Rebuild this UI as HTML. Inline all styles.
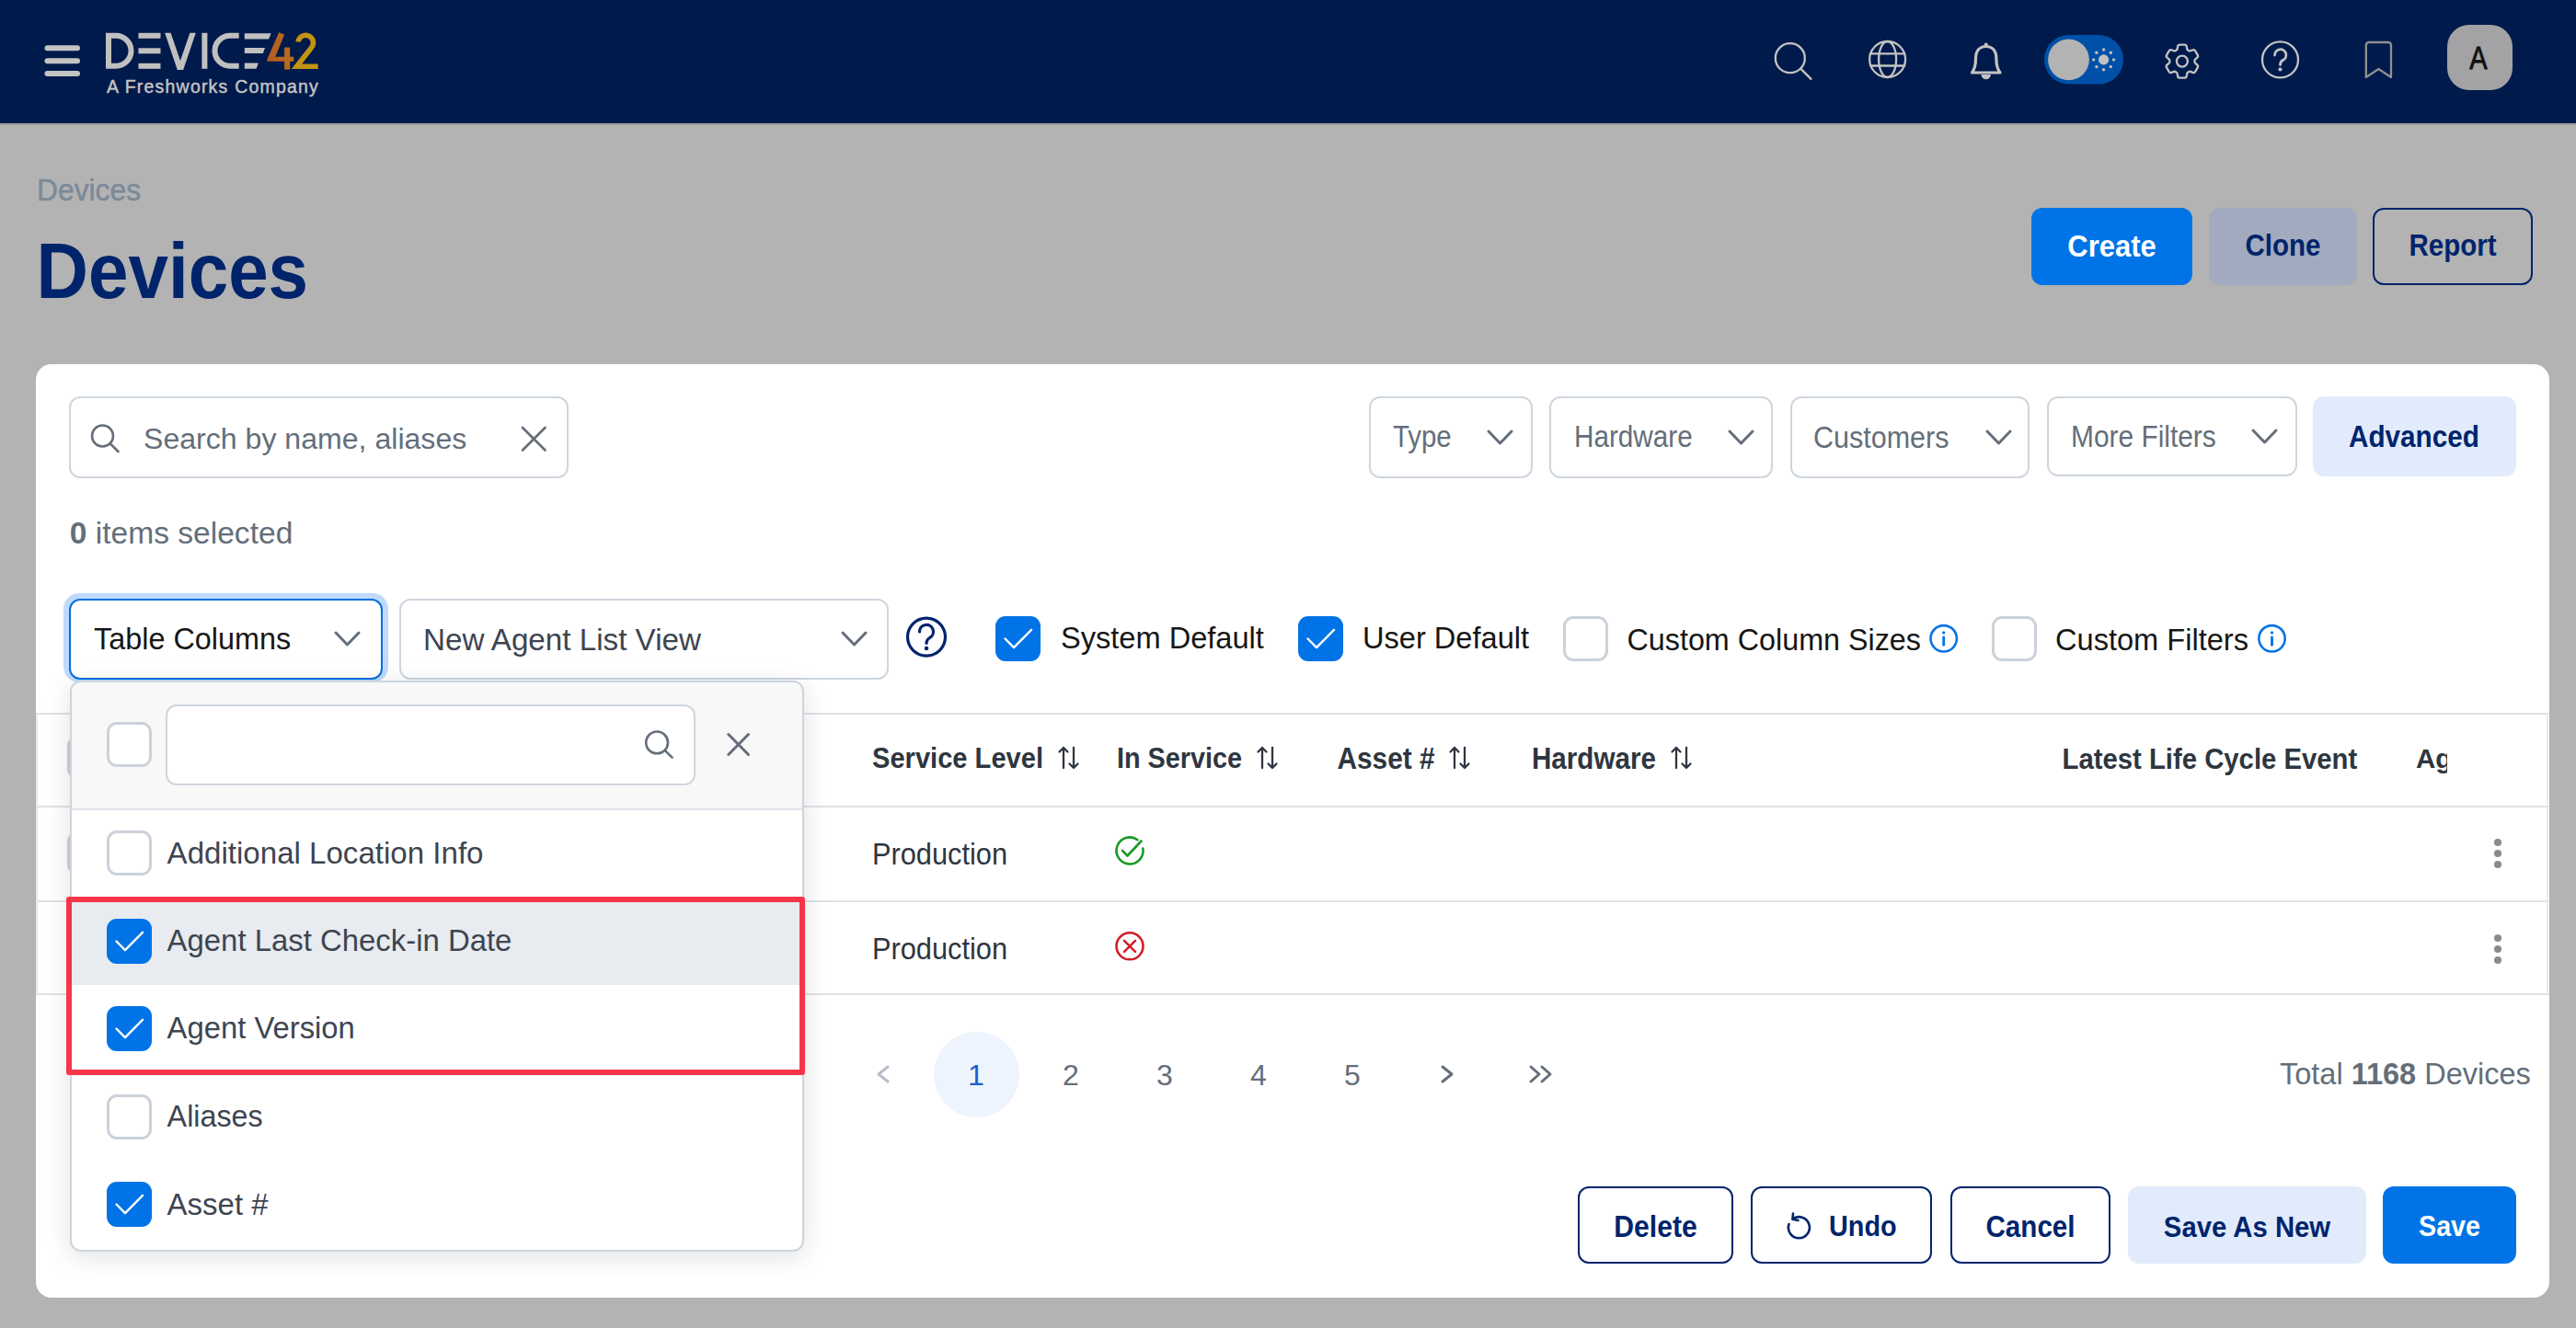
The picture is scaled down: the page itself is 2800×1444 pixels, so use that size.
<!DOCTYPE html>
<html><head><meta charset="utf-8">
<style>
*{box-sizing:border-box;margin:0;padding:0}
html,body{width:2800px;height:1444px;overflow:hidden;background:#b3b3b3;font-family:"Liberation Sans",sans-serif}
.a{position:absolute}
.t{position:absolute;line-height:1;white-space:nowrap}
.b{font-weight:bold}
.g{transform:scaleY(1.1);transform-origin:0 84.65%}
#hdr{position:absolute;left:0;top:0;width:2800px;height:134px;background:#001a4b}
#hdrline{position:absolute;left:0;top:134px;width:2800px;height:2px;background:#9e9e9e}
.btn{position:absolute;border-radius:12px}
.box{position:absolute;border:2px solid #cfd6de;border-radius:12px;background:#fff}
.cbx{position:absolute;width:49px;height:49px;border-radius:11px}
.cbx.on{background:#0073e6}
.cbx.off{border:3px solid #cbd2da;background:#fff}
</style></head><body>
<div id="hdr"></div>
<div id="hdrline"></div>
<!-- header svg -->
<svg class="a" style="left:0;top:0" width="2800" height="134" viewBox="0 0 2800 134">
  <g stroke="#c4c4c4" stroke-width="6" stroke-linecap="round">
    <line x1="51.5" y1="52.3" x2="84" y2="52.3"/>
    <line x1="51.5" y1="66.2" x2="84" y2="66.2"/>
    <line x1="51.5" y1="80" x2="84" y2="80"/>
  </g>
  <defs><linearGradient id="g42" x1="290" y1="0" x2="346" y2="0" gradientUnits="userSpaceOnUse"><stop offset="0" stop-color="#b45a22"/><stop offset="1" stop-color="#c0801a"/></linearGradient></defs>
  <g fill="#c0c0c0">
    <path d="M118,38.8 H126 A16.5,16.5 0 0 1 126,71.8 H118 Z" fill="none" stroke="#c0c0c0" stroke-width="6"/>
    <rect x="150.5" y="35.8" width="24" height="6"/>
    <rect x="150.5" y="52.3" width="24" height="6"/>
    <rect x="150.5" y="68.8" width="24" height="6"/>
    <polygon points="179.2,35.8 185.6,35.8 196,66 206.4,35.8 212.8,35.8 199.2,76 192.8,76"/>
    <rect x="219.4" y="35.8" width="6" height="39"/>
    <path d="M259.7,38.8 H250 A16.5,16.5 0 0 0 250,71.8 H259.7" fill="none" stroke="#c0c0c0" stroke-width="6"/>
    <polygon points="265.8,36.3 294.6,36.3 292.1,42.6 265.8,42.6"/>
    <polygon points="265.8,52 288.1,52 285.8,58.1 265.8,58.1"/>
    <polygon points="265.8,68.4 280.9,68.4 278.6,74.8 265.8,74.8"/>
  </g>
  <g fill="url(#g42)">
    <polygon points="303.2,35.3 309.2,37.6 299.2,61.8 319.3,61.8 319.3,66.7 290.4,66.7 290.4,64.6"/>
    <rect x="309.1" y="51.6" width="6.1" height="24"/>
  </g>
  <path d="M324.1,45.5 A8.2,8.2 0 1 1 338.5,51.8 L322.5,72.2 H345.7" fill="none" stroke="#c29212" stroke-width="5.6"/>
  <!-- icons -->
  <g fill="none" stroke="#c2c2c2" stroke-width="2.3" stroke-linecap="round" stroke-linejoin="round">
    <circle cx="1945.8" cy="63.2" r="16"/>
    <line x1="1957.5" y1="74.9" x2="1968.5" y2="85.9"/>
    <circle cx="2051.6" cy="64.5" r="19.5"/>
    <ellipse cx="2051.6" cy="64.5" rx="9.5" ry="19.5"/>
    <line x1="2033" y1="58.4" x2="2070.2" y2="58.4"/>
    <line x1="2033" y1="71.5" x2="2070.2" y2="71.5"/>
  </g>
</svg>
<div class="t" style="left:116px;top:84.7px;font-size:19.5px;letter-spacing:1.2px;color:#c4c4c4;-webkit-text-stroke:0.45px #c4c4c4">A Freshworks Company</div>

<!-- title -->
<div class="t" style="left:40px;top:192.3px;font-size:31.8px;color:#7b8a98;-webkit-text-stroke:0.5px #7b8a98;transform:scaleY(1.04);transform-origin:0 84.65%">Devices</div>
<div class="t b" style="left:39.5px;top:258px;font-size:78.2px;color:#00246c;transform:scaleY(1.095);transform-origin:0 84.65%">Devices</div>

<div class="btn" style="left:2208px;top:226px;width:175px;height:84px;background:#0074e6"></div>
<div class="btn" style="left:2401px;top:226px;width:161px;height:84px;background:#a1aabf"></div>
<div class="btn" style="left:2579px;top:226px;width:174px;height:84px;border:2px solid #00246c"></div>

<!-- card -->
<div class="a" style="left:39px;top:396px;width:2732px;height:1015px;background:#fff;border-radius:17px"></div>


<!-- header icons part 2 -->
<svg class="a" style="left:2100px;top:0" width="700" height="134" viewBox="2100 0 700 134">
  <g fill="none" stroke="#c2c2c2" stroke-width="3.2" stroke-linecap="round" stroke-linejoin="round">
    <path d="M2143.5,79 C2146.5,75 2147.5,72 2147.5,64 C2147.5,55 2152,50.5 2158.7,50.5 C2165.4,50.5 2169.9,55 2169.9,64 C2169.9,72 2171,75 2174,79 Z"/>
  </g>
  <g fill="#c2c2c2">
    <circle cx="2158.7" cy="48.5" r="2"/>
    <path d="M2153.5,81 A5.2,5.2 0 0 0 2163.9,81 Z"/>
  </g>
  <rect x="2222" y="38" width="86" height="53.6" rx="26.8" fill="#0050a8"/>
  <circle cx="2248.5" cy="64.9" r="22.4" fill="#b3b3b3"/>
  <g fill="#c2c2c2">
    <circle cx="2286.6" cy="64.9" r="5.6"/>
    <circle cx="2286.6" cy="54" r="1.7"/><circle cx="2286.6" cy="75.8" r="1.7"/>
    <circle cx="2275.7" cy="64.9" r="1.7"/><circle cx="2297.5" cy="64.9" r="1.7"/>
    <circle cx="2278.9" cy="57.2" r="1.7"/><circle cx="2294.3" cy="57.2" r="1.7"/>
    <circle cx="2278.9" cy="72.6" r="1.7"/><circle cx="2294.3" cy="72.6" r="1.7"/>
  </g>
  <g fill="none" stroke="#c2c2c2" stroke-width="2.3" stroke-linecap="round" stroke-linejoin="round">
    <g transform="translate(2347.9,42.6) scale(2)" stroke-width="1.15"><path d="M9.594 3.94c.09-.542.56-.94 1.11-.94h2.593c.55 0 1.02.398 1.11.94l.213 1.281c.063.374.313.686.645.87.074.04.147.083.22.127.325.196.72.257 1.075.124l1.217-.456a1.125 1.125 0 0 1 1.37.49l1.296 2.247a1.125 1.125 0 0 1-.26 1.431l-1.003.827c-.293.241-.438.613-.43.992a7.723 7.723 0 0 1 0 .255c-.008.378.137.75.43.991l1.004.827c.424.35.534.955.26 1.43l-1.298 2.247a1.125 1.125 0 0 1-1.369.491l-1.217-.456c-.355-.133-.75-.072-1.076.124a6.470 6.470 0 0 1-.22.128c-.331.183-.581.495-.644.869l-.213 1.281c-.09.543-.56.94-1.11.94h-2.594c-.55 0-1.019-.398-1.11-.94l-.213-1.281c-.062-.374-.312-.686-.644-.87a6.520 6.520 0 0 1-.22-.127c-.325-.196-.72-.257-1.076-.124l-1.217.456a1.125 1.125 0 0 1-1.369-.49l-1.297-2.247a1.125 1.125 0 0 1 .26-1.431l1.004-.827c.292-.24.437-.613.43-.991a6.932 6.932 0 0 1 0-.255c.007-.38-.138-.751-.43-.992l-1.004-.827a1.125 1.125 0 0 1-.26-1.430l1.297-2.247a1.125 1.125 0 0 1 1.37-.491l1.216.456c.356.133.751.072 1.076-.124.072-.044.146-.086.22-.128.332-.183.582-.495.644-.869l.214-1.28Z"/><circle cx="12" cy="12" r="3"/></g>
    <circle cx="2478.5" cy="64.9" r="19.5"/>
    <path d="M2472.5,60 A6.2,6.2 0 1 1 2481.2,65.6 C2479.3,66.6 2478.5,67.8 2478.5,70.5" stroke-width="2.8"/>
  </g>
  <circle cx="2478.5" cy="75.5" r="2.1" fill="#c2c2c2"/>
  <path d="M2571.8,84 V49 A3,3 0 0 1 2574.8,46 H2596 A3,3 0 0 1 2599,49 V84 L2585.4,75 Z" fill="none" stroke="#909090" stroke-width="2.3" stroke-linejoin="round"/>
  <rect x="2660" y="27" width="71" height="71" rx="24" fill="#a3a3a5"/>
</svg>
<div class="t" style="left:2644px;width:100px;text-align:center;top:46.2px;font-size:34.5px;color:#111;-webkit-text-stroke:0.8px #111;transform:scaleX(0.84)">A</div>

<!-- header buttons text -->
<div class="t b g" style="left:2208px;width:175px;text-align:center;top:252.5px;font-size:31px;color:#fff">Create</div>
<div class="t b g" style="left:2401px;width:161px;text-align:center;top:252.5px;font-size:29.5px;color:#00246c">Clone</div>
<div class="t b g" style="left:2579px;width:174px;text-align:center;top:252.5px;font-size:29.5px;color:#00246c">Report</div>

<!-- search -->
<div class="box" style="left:75px;top:431px;width:543px;height:89px"></div>
<svg class="a" style="left:0;top:380px" width="700" height="200" viewBox="0 380 700 200">
  <g fill="none" stroke="#646e7a" stroke-width="2.6" stroke-linecap="round">
    <circle cx="111.5" cy="474" r="11.5"/>
    <line x1="119.8" y1="482.3" x2="128.5" y2="491"/>
    <line x1="568" y1="465" x2="592.5" y2="489.5"/>
    <line x1="592.5" y1="465" x2="568" y2="489.5"/>
  </g>
</svg>
<div class="t" style="left:156px;top:460.9px;font-size:32.1px;color:#646e7a">Search by name, aliases</div>

<!-- filters -->
<div class="box" style="left:1488px;top:431px;width:178px;height:89px"></div>
<div class="box" style="left:1684px;top:431px;width:243px;height:89px"></div>
<div class="box" style="left:1946px;top:431px;width:260px;height:89px"></div>
<div class="box" style="left:2225px;top:431px;width:272px;height:87px"></div>
<div class="btn" style="left:2514px;top:431px;width:221px;height:87px;background:#e1ebfc"></div>
<div class="t g" style="left:1514px;top:461.1px;font-size:29.4px;color:#646e7a">Type</div>
<div class="t g" style="left:1711px;top:461.1px;font-size:29.7px;color:#646e7a">Hardware</div>
<div class="t g" style="left:1971px;top:461.1px;font-size:30.5px;color:#646e7a">Customers</div>
<div class="t g" style="left:2251px;top:461.1px;font-size:29.9px;color:#646e7a">More Filters</div>
<div class="t b g" style="left:2553px;top:461.1px;font-size:29.7px;color:#00246c">Advanced</div>
<svg class="a" style="left:1400px;top:400px" width="1400" height="140" viewBox="1400 400 1400 140">
  <g fill="none" stroke="#646e7a" stroke-width="3" stroke-linecap="round" stroke-linejoin="round">
    <polyline points="1618,469 1630.5,482 1643,469"/>
    <polyline points="1880,469 1892.5,482 1905,469"/>
    <polyline points="2160,469 2172.5,482 2185,469"/>
    <polyline points="2449,468 2461.5,481 2474,468"/>
  </g>
</svg>

<!-- items selected -->
<div class="t" style="left:75.7px;top:562.5px;font-size:33.6px;color:#646e7a"><b>0</b> items selected</div>

<!-- table columns select -->
<div class="a" style="left:69px;top:645px;width:353px;height:97px;border-radius:17px;background:#bfdafb"></div>
<div class="a" style="left:75px;top:651px;width:341px;height:88px;border-radius:12px;border:2px solid #0070e0;background:#fff"></div>
<div class="t" style="left:102px;top:678.6px;font-size:32.4px;color:#161616">Table Columns</div>
<div class="box" style="left:434px;top:651px;width:532px;height:88px"></div>
<div class="t" style="left:460px;top:678.6px;font-size:33.2px;color:#3d4550">New Agent List View</div>
<svg class="a" style="left:300px;top:640px" width="800" height="110" viewBox="300 640 800 110">
  <g fill="none" stroke="#646e7a" stroke-width="3" stroke-linecap="round" stroke-linejoin="round">
    <polyline points="365,688 377.5,701 390,688"/>
    <polyline points="916,688 928.5,701 941,688"/>
  </g>
  <circle cx="1007" cy="692.6" r="20.5" fill="none" stroke="#00246c" stroke-width="3.2"/>
  <path d="M999.5,687 A7.5,7.5 0 1 1 1010.5,693.5 C1008,695 1007,696.5 1007,699.5" fill="none" stroke="#00246c" stroke-width="3.2" stroke-linecap="round"/>
  <circle cx="1007" cy="705" r="2.3" fill="#00246c"/>
</svg>

<!-- checkboxes row -->
<div class="cbx on" style="left:1082px;top:670px"></div>
<div class="cbx on" style="left:1411px;top:670px"></div>
<div class="cbx off" style="left:1699px;top:670px"></div>
<div class="cbx off" style="left:2165px;top:670px"></div>
<svg class="a" style="left:1070px;top:650px" width="1450" height="90" viewBox="1070 650 1450 90">
  <g fill="none" stroke="#fff" stroke-width="2.4" stroke-linecap="round" stroke-linejoin="round">
    <polyline points="1092.5,694.5 1102,704.2 1121,684.8"/>
    <polyline points="1421.5,694.5 1431,704.2 1450,684.8"/>
  </g>
  <g fill="none" stroke="#0a73e6" stroke-width="2.6" stroke-linecap="round">
    <circle cx="2112.7" cy="694.3" r="14.2"/>
    <circle cx="2469.5" cy="694.3" r="14.2"/>
    <line x1="2112.7" y1="693" x2="2112.7" y2="701.3" stroke-width="2.9"/>
    <line x1="2469.5" y1="693" x2="2469.5" y2="701.3" stroke-width="2.9"/>
  </g>
  <g fill="#0a73e6">
    <circle cx="2112.7" cy="687.9" r="1.7"/>
    <circle cx="2469.5" cy="687.9" r="1.7"/>
  </g>
</svg>
<div class="t" style="left:1153px;top:678.4px;font-size:32.6px;color:#161616">System Default</div>
<div class="t" style="left:1481px;top:678.4px;font-size:32.6px;color:#161616">User Default</div>
<div class="t" style="left:1768.5px;top:680.2px;font-size:32.3px;color:#161616">Custom Column Sizes</div>
<div class="t" style="left:2234px;top:680.2px;font-size:32.6px;color:#161616">Custom Filters</div>

<!-- table -->
<div class="a" style="left:39px;top:775px;width:2732px;height:2px;background:#dde2e7"></div>
<div class="a" style="left:39px;top:876px;width:2732px;height:2px;background:#dde2e7"></div>
<div class="a" style="left:39px;top:979px;width:2732px;height:2px;background:#dde2e7"></div>
<div class="a" style="left:39px;top:1080px;width:2732px;height:2px;background:#dde2e7"></div>
<div class="a" style="left:2768px;top:776px;width:2px;height:305px;background:#e6e9ed"></div>
<div class="a" style="left:39px;top:776px;width:2px;height:305px;background:#e6e9ed"></div>
<div class="t b g" style="left:948px;top:810.8px;font-size:29.1px;color:#2e3640">Service Level</div>
<div class="t b g" style="left:1214px;top:810.8px;font-size:28.8px;color:#2e3640">In Service</div>
<div class="t b g" style="left:1453.5px;top:810.8px;font-size:29.8px;color:#2e3640">Asset #</div>
<div class="t b g" style="left:1665px;top:810.8px;font-size:29.6px;color:#2e3640">Hardware</div>
<div class="t b g" style="left:2241.5px;top:810.8px;font-size:29.3px;color:#2e3640">Latest Life Cycle Event</div>
<div class="a" style="left:2620px;top:800px;width:40px;height:50px;overflow:hidden"><div class="t b" style="left:6px;top:10px;font-size:29.5px;color:#2e3640">Ag</div></div>
<svg class="a" style="left:1100px;top:780px" width="800" height="300" viewBox="1100 780 800 300">
  <g fill="none" stroke="#2e3640" stroke-width="2.3" stroke-linecap="round" stroke-linejoin="round">
    <path d="M1156,835 V813 M1151.5,817.5 L1156,813 L1160.5,817.5"/>
    <path d="M1167,813 V835 M1162.5,830.5 L1167,835 L1171.5,830.5"/>
    <path d="M1372,835 V813 M1367.5,817.5 L1372,813 L1376.5,817.5"/>
    <path d="M1383,813 V835 M1378.5,830.5 L1383,835 L1387.5,830.5"/>
    <path d="M1581,835 V813 M1576.5,817.5 L1581,813 L1585.5,817.5"/>
    <path d="M1592,813 V835 M1587.5,830.5 L1592,835 L1596.5,830.5"/>
    <path d="M1822,835 V813 M1817.5,817.5 L1822,813 L1826.5,817.5"/>
    <path d="M1833,813 V835 M1828.5,830.5 L1833,835 L1837.5,830.5"/>
  </g>
  <g fill="none" stroke="#1a9a28" stroke-width="2.6" stroke-linecap="round" stroke-linejoin="round">
    <path d="M1236.5,913.2 A14.5,14.5 0 1 0 1242.3,922.5"/>
    <polyline points="1220,925 1225.5,930.5 1240.5,914.5"/>
  </g>
  <g fill="none" stroke="#cf1f2a" stroke-width="2.6" stroke-linecap="round">
    <circle cx="1228" cy="1028.8" r="14.5"/>
    <line x1="1222" y1="1022.8" x2="1234" y2="1034.8"/>
    <line x1="1234" y1="1022.8" x2="1222" y2="1034.8"/>
  </g>
</svg>
<div class="t g" style="left:948px;top:914.5px;font-size:30.75px;color:#2e3640">Production</div>
<div class="t g" style="left:948px;top:1018.3px;font-size:30.75px;color:#2e3640">Production</div>
<svg class="a" style="left:2700px;top:900px" width="30" height="160" viewBox="2700 900 30 160">
  <g fill="#8a8a8a">
    <circle cx="2715" cy="916" r="4"/><circle cx="2715" cy="928" r="4"/><circle cx="2715" cy="940" r="4"/>
    <circle cx="2715" cy="1020" r="4"/><circle cx="2715" cy="1032" r="4"/><circle cx="2715" cy="1044" r="4"/>
  </g>
</svg>
<!-- behind-dropdown table checkbox edges -->
<div class="a" style="left:73px;top:800px;width:49px;height:47px;border:3px solid #cbd2da;border-radius:11px"></div>
<div class="a" style="left:73px;top:904px;width:49px;height:47px;border:3px solid #cbd2da;border-radius:11px"></div>

<!-- pagination -->
<div class="a" style="left:1015px;top:1121.5px;width:93px;height:93px;border-radius:50%;background:#eef4fd"></div>
<svg class="a" style="left:900px;top:1130px" width="800" height="80" viewBox="900 1130 800 80">
  <polyline points="965,1160 955,1168 965,1176" fill="none" stroke="#b8bec6" stroke-width="3" stroke-linecap="round" stroke-linejoin="round"/>
  <polyline points="1568,1160 1578,1168 1568,1176" fill="none" stroke="#646e7a" stroke-width="3" stroke-linecap="round" stroke-linejoin="round"/>
  <polyline points="1664,1160 1673,1168 1664,1176" fill="none" stroke="#646e7a" stroke-width="3" stroke-linecap="round" stroke-linejoin="round"/>
  <polyline points="1676,1160 1685,1168 1676,1176" fill="none" stroke="#646e7a" stroke-width="3" stroke-linecap="round" stroke-linejoin="round"/>
</svg>
<div class="t" style="left:1011px;width:100px;text-align:center;top:1152.7px;font-size:32px;color:#1a5fd0">1</div>
<div class="t" style="left:1114px;width:100px;text-align:center;top:1152.7px;font-size:32px;color:#646e7a">2</div>
<div class="t" style="left:1216px;width:100px;text-align:center;top:1152.7px;font-size:32px;color:#646e7a">3</div>
<div class="t" style="left:1318px;width:100px;text-align:center;top:1152.7px;font-size:32px;color:#646e7a">4</div>
<div class="t" style="left:1420px;width:100px;text-align:center;top:1152.7px;font-size:32px;color:#646e7a">5</div>
<div class="t" style="left:2478px;top:1152.2px;font-size:32.5px;color:#646e7a">Total <b>1168</b> Devices</div>

<!-- bottom buttons -->
<div class="btn" style="left:1715px;top:1290px;width:169px;height:84px;border:2px solid #00246c"></div>
<div class="btn" style="left:1903px;top:1290px;width:197px;height:84px;border:2px solid #00246c"></div>
<div class="btn" style="left:2120px;top:1290px;width:174px;height:84px;border:2px solid #00246c"></div>
<div class="btn" style="left:2313px;top:1290px;width:259px;height:84px;background:#e1ebfc"></div>
<div class="btn" style="left:2590px;top:1290px;width:145px;height:84px;background:#0074e6"></div>
<div class="t b g" style="left:1715px;width:169px;text-align:center;top:1320px;font-size:30.2px;color:#00246c">Delete</div>
<div class="t b g" style="left:1988px;top:1320px;font-size:28.8px;color:#00246c">Undo</div>
<div class="t b g" style="left:2120px;width:174px;text-align:center;top:1320px;font-size:29.6px;color:#00246c">Cancel</div>
<div class="t b g" style="left:2313px;width:259px;text-align:center;top:1320px;font-size:29.3px;color:#00246c">Save As New</div>
<div class="t b g" style="left:2590px;width:145px;text-align:center;top:1320px;font-size:28.7px;color:#fff">Save</div>
<svg class="a" style="left:1930px;top:1305px" width="60" height="70" viewBox="1930 1300 60 70">
  <path d="M1948.5,1320.5 A11.5,11.5 0 1 1 1944.5,1326" fill="none" stroke="#00246c" stroke-width="2.6" stroke-linecap="round"/>
  <polyline points="1949,1314.5 1948.5,1320.8 1954.5,1322" fill="none" stroke="#00246c" stroke-width="2.6" stroke-linecap="round" stroke-linejoin="round"/>
</svg>

<!-- dropdown panel -->
<div class="a" style="left:76px;top:740px;width:798px;height:621px;border:2px solid #cdd4dc;border-radius:12px;background:#fff;box-shadow:0 6px 28px rgba(20,30,50,0.13);overflow:hidden">
  <div class="a" style="left:0;top:0;width:794px;height:139px;background:#f8f8f9;border-bottom:2px solid #dde2e7"></div>
  <div class="a" style="left:0;top:233px;width:794px;height:96px;background:#e8ebef"></div>
</div>
<div class="cbx off" style="left:116px;top:785px"></div>
<div class="box" style="left:180px;top:766px;width:576px;height:88px"></div>
<svg class="a" style="left:80px;top:740px" width="790" height="620" viewBox="80 740 790 620">
  <g fill="none" stroke="#646e7a" stroke-width="2.6" stroke-linecap="round">
    <circle cx="714.1" cy="807.4" r="11.9"/>
    <line x1="722.6" y1="815.9" x2="730.6" y2="823.6"/>
  </g>
  <g fill="none" stroke="#646e7a" stroke-width="3" stroke-linecap="round">
    <line x1="791.8" y1="798.5" x2="813.5" y2="820.5"/>
    <line x1="813.5" y1="798.5" x2="791.8" y2="820.5"/>
  </g>
</svg>
<div class="cbx off" style="left:116px;top:903px"></div>
<div class="cbx on" style="left:116px;top:999px"></div>
<div class="cbx on" style="left:116px;top:1094px"></div>
<div class="cbx off" style="left:116px;top:1190px"></div>
<div class="cbx on" style="left:116px;top:1285px"></div>
<svg class="a" style="left:80px;top:980px" width="100" height="360" viewBox="80 980 100 360">
  <g fill="none" stroke="#fff" stroke-width="2.4" stroke-linecap="round" stroke-linejoin="round">
    <polyline points="126.5,1023.5 136,1033.2 155,1013.8"/>
    <polyline points="126.5,1118.5 136,1128.2 155,1108.8"/>
    <polyline points="126.5,1309.5 136,1319.2 155,1299.8"/>
  </g>
</svg>
<div class="t" style="left:181.6px;top:911.2px;font-size:33.1px;color:#3d4550">Additional Location Info</div>
<div class="t" style="left:181.6px;top:1007.2px;font-size:32.9px;color:#3d4550">Agent Last Check-in Date</div>
<div class="t" style="left:181.6px;top:1102.2px;font-size:32.8px;color:#3d4550">Agent Version</div>
<div class="t" style="left:181.6px;top:1198.2px;font-size:32.3px;color:#3d4550">Aliases</div>
<div class="t" style="left:181.6px;top:1293.2px;font-size:33px;color:#3d4550">Asset #</div>
<!-- red highlight -->
<div class="a" style="left:72px;top:975px;width:803px;height:194px;border:6px solid #f5364a;border-radius:3px"></div>

</body></html>
